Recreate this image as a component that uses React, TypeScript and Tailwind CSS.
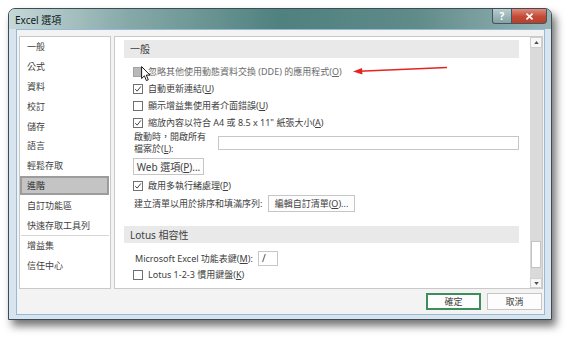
import React from 'react';

const NAV = ['一般', '公式', '資料', '校訂', '儲存', '語言', '輕鬆存取', '進階', '自訂功能區', '快速存取工具列'];
const NAV2 = ['增益集', '信任中心'];

function Check({ checked, disabled }: { checked?: boolean; disabled?: boolean }) {
    return (
        <span
            className={`flex h-[10px] w-[10px] shrink-0 items-center justify-center border ${
                disabled ? 'border-[#a3a3a3] bg-[#b9b9b9]' : 'border-[#707070] bg-white'
            }`}
        >
            {checked && (
                <svg viewBox="0 0 10 10" className="h-[8px] w-[8px]">
                    <path d="M1.5 5.2 L4 7.6 L8.6 1.8" fill="none" stroke="#3a3a3a" strokeWidth="1.2" />
                </svg>
            )}
        </span>
    );
}

function CheckRow({ checked, disabled, children }: { checked?: boolean; disabled?: boolean; children: React.ReactNode }) {
    return (
        <div className="flex h-[17px] items-center gap-[5px] pl-[9px]">
            <Check checked={checked} disabled={disabled} />
            <span className={disabled ? 'text-[#6a6a6a]' : ''}>{children}</span>
        </div>
    );
}

function Btn({ children, className }: { children: React.ReactNode; className?: string }) {
    return (
        <div className={`flex h-[17px] items-center justify-center border border-[#c6c6c6] bg-[#fdfdfd] ${className ?? ''}`}>
            {children}
        </div>
    );
}

export default function App() {
    return (
        <div className="relative h-[337px] w-[567px] overflow-hidden bg-white pl-[8px] pt-[8px] font-['Noto_Sans','Noto_Sans_CJK_TC',sans-serif] text-[9px] leading-none text-[#404040]">
            {/* window */}
            <div className="flex h-[312px] w-[544px] flex-col rounded-t-[7px] border border-[#3e4d55] bg-[#d9e5ee] shadow-[4px_6px_8px_rgba(0,0,0,0.55)]">
                {/* title bar */}
                <div className="flex h-[20px] items-start justify-between rounded-t-[6px] bg-[linear-gradient(90deg,#c6d8d8_0%,#86a9a8_22%,#4f817e_50%,#5f8b89_75%,#98b5b6_100%)] pl-[6px] pr-[4px]">
                    <span className="mt-[6px] text-[10px] text-[#101a1c]">Excel 選項</span>
                    <div className="flex">
                        <div className="flex h-[15px] w-[20px] items-center justify-center rounded-bl-[3px] border border-t-0 border-[#44555e] bg-[linear-gradient(180deg,#b7cccd,#84a2a4)] text-[10px] font-bold text-white">
                            ?
                        </div>
                        <div className="flex h-[15px] w-[35px] items-center justify-center rounded-br-[4px] border border-l-0 border-t-0 border-[#44555e] bg-[linear-gradient(180deg,#e08a7c,#c24a36_55%,#b8412d)]">
                            <svg viewBox="0 0 10 8" className="h-[7px] w-[9px]">
                                <path d="M1.5 0.8 L8.5 7.2 M8.5 0.8 L1.5 7.2" stroke="white" strokeWidth="2" />
                            </svg>
                        </div>
                    </div>
                </div>

                {/* client */}
                <div className="mb-[4px] ml-[7px] mr-[6px] flex flex-1 flex-col border border-[#98b8d8] bg-[#f3f3f3]">
                    <div className="ml-[2px] mr-[1px] mt-[6px] flex h-[253px] gap-[3px]">
                        {/* nav */}
                        <div className="flex w-[92px] flex-col border border-[#c9c9c9] bg-white">
                            {NAV.map((item) => (
                                <div
                                    key={item}
                                    className={`flex h-[19.8px] items-center ${
                                        item === '進階'
                                            ? 'mr-[1px] border-2 border-[#9c9c9c] bg-[#c4c4c4] pl-[5px] text-[#2a2a2a]'
                                            : 'pl-[7px]'
                                    }`}
                                >
                                    {item}
                                </div>
                            ))}
                            <div className="mx-[1px] h-px bg-[#d6d6d6]" />
                            {NAV2.map((item) => (
                                <div key={item} className="flex h-[19.8px] items-center pl-[7px]">
                                    {item}
                                </div>
                            ))}
                        </div>

                        {/* content */}
                        <div className="flex flex-1 border border-[#c9c9c9] bg-white">
                            <div className="flex flex-1 flex-col pl-[9px] pr-[11px] pt-[3px]">
                                <div className="flex h-[18px] items-center bg-[#e9e9e9] pl-[6px] text-[10px]">一般</div>
                                <div className="mt-[5px]">
                                    <CheckRow disabled>
                                        忽略其他使用動態資料交換 (DDE) 的應用程式(<u>O</u>)
                                    </CheckRow>
                                    <CheckRow checked>
                                        自動更新連結(<u>U</u>)
                                    </CheckRow>
                                    <CheckRow>
                                        顯示增益集使用者介面錯誤(<u>U</u>)
                                    </CheckRow>
                                    <CheckRow checked>
                                        縮放內容以符合 A4 或 8.5 x 11" 紙張大小(<u>A</u>)
                                    </CheckRow>
                                </div>
                                <div className="flex h-[24px] items-center pl-[9px]">
                                    <div className="w-[85px] pl-[1px] leading-[12px]">
                                        啟動時，開啟所有
                                        <br />
                                        檔案於(<u>L</u>):
                                    </div>
                                    <div className="h-[14px] flex-1 border border-[#c6c6c6] bg-white" />
                                </div>
                                <div className="mt-[3px] pl-[9px]">
                                    <Btn className="w-[71px] text-[10px]">
                                        Web 選項(<u>P</u>)...
                                    </Btn>
                                </div>
                                <div className="mt-[2px]">
                                    <CheckRow checked>
                                        啟用多執行緒處理(<u>P</u>)
                                    </CheckRow>
                                </div>
                                <div className="mt-px flex h-[17px] items-center pl-[10px]">
                                    <span className="w-[134px]">建立清單以用於排序和填滿序列:</span>
                                    <Btn className="w-[87px]">
                                        編輯自訂清單(<u>O</u>)...
                                    </Btn>
                                </div>
                                <div className="mt-[14px] flex h-[17px] items-center bg-[#e9e9e9] pl-[6px] text-[10px]">
                                    Lotus 相容性
                                </div>
                                <div className="mt-[7px] flex h-[16px] items-center gap-[5px] pl-[11px]">
                                    <span>
                                        Microsoft Excel 功能表鍵(<u>M</u>):
                                    </span>
                                    <div className="flex h-[15px] w-[20px] items-center border border-[#c6c6c6] bg-white pl-[3px] text-[10px]">
                                        /
                                    </div>
                                </div>
                                <div className="flex h-[17px] items-center gap-[5px] pl-[9px]">
                                    <Check />
                                    <span>
                                        Lotus 1-2-3 慣用鍵盤(<u>K</u>)
                                    </span>
                                </div>
                            </div>

                            {/* scrollbar */}
                            <div className="flex w-[12px] flex-col bg-[#dadada]">
                                <div className="flex h-[11px] items-center justify-center border border-[#d0d0d0] bg-[#f7f7f7]">
                                    <svg viewBox="0 0 6 4" className="h-[3px] w-[5px]">
                                        <path d="M0 4 L3 0 L6 4 Z" fill="#505050" />
                                    </svg>
                                </div>
                                <div className="flex-1" />
                                <div className="mx-px h-[27px] border border-[#c3c3c3] bg-white" />
                                <div className="h-[10px]" />
                                <div className="flex h-[10px] items-center justify-center border border-[#d0d0d0] bg-[#f7f7f7]">
                                    <svg viewBox="0 0 6 4" className="h-[3px] w-[5px]">
                                        <path d="M0 0 L6 0 L3 4 Z" fill="#505050" />
                                    </svg>
                                </div>
                            </div>
                        </div>
                    </div>

                    {/* footer buttons */}
                    <div className="mr-[2px] mt-[4px] flex justify-end gap-[6px]">
                        <div className="flex h-[17px] w-[55px] items-center justify-center border-2 border-[#3f8c5c] bg-[#fdfdfd]">確定</div>
                        <Btn className="w-[55px]">取消</Btn>
                    </div>
                </div>
            </div>

            {/* red annotation arrow */}
            <svg className="absolute left-[350px] top-[62px]" width="100" height="14" viewBox="0 0 100 14">
                <path d="M97 5.5 L9 9.2" stroke="#e5241f" strokeWidth="1.6" fill="none" />
                <path d="M3 9.5 L12 6 L12.4 12.6 Z" fill="#e5241f" />
            </svg>

            {/* mouse cursor */}
            <svg className="absolute left-[141px] top-[66px]" width="11" height="17" viewBox="0 0 11 17">
                <path d="M0.6 0.6 L0.6 12.5 L3.4 9.8 L5.4 14.6 L7.3 13.8 L5.3 9.1 L9 9.1 Z" fill="white" stroke="black" strokeWidth="0.9" strokeLinejoin="round" />
            </svg>
        </div>
    );
}
